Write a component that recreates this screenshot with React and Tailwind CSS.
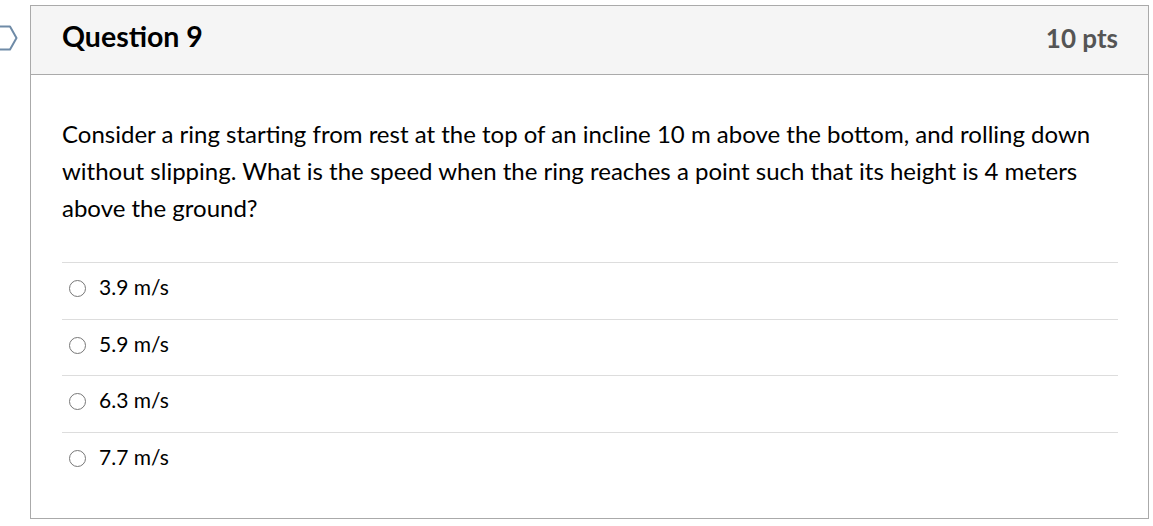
const options = ['3.9 m/s', '5.9 m/s', '6.3 m/s', '7.7 m/s'];

export default function App() {
  return (
    <div className="flex bg-white pt-[5px] pr-[4px] font-['Lato','Liberation_Sans',sans-serif] text-[#000]">
      <div className="w-[30px] shrink-0 pt-[20px]">
        <svg width="20" height="26" viewBox="0 0 20 26">
          <path d="M-4 1.5 H10 L16.5 13 L10 24.5 H-4" fill="none" stroke="#6f8ba7" strokeWidth="2" strokeLinejoin="round" />
        </svg>
      </div>
      <div className="flex-1 h-[514px] border border-[#aaaaaa] flex flex-col">
        <div className="h-[69px] shrink-0 bg-[#f5f5f5] border-b border-[#aaaaaa] flex items-center justify-between pl-[31px] pr-[30px] pb-[3px]">
          <h2 className="text-[28.5px] font-bold text-[#000] mb-[4px]">Question 9</h2>
          <div className="text-[26px] font-bold text-[#555555]">10 pts</div>
        </div>
        <div className="pl-[31px] pr-[30px] pt-[40px]">
          <p className="text-[24px] leading-[37px] text-[#000]">
            Consider a ring starting from rest at the top of an incline 10 m above the bottom, and rolling down without slipping. What is the speed when the ring reaches a point such that its height is 4 meters above the ground?
          </p>
          <div className="mt-[36px]">
            {options.map((o) => (
              <div key={o} className="h-[56.5px] border-t border-[#dddddd] flex items-center pl-[7px] pb-[8px]">
                <span className="w-[17px] h-[17px] rounded-full border-[1.5px] border-[#777777] bg-white shrink-0 mt-[4px]" />
                <span className="ml-[13px] text-[21px] text-[#000]">{o}</span>
              </div>
            ))}
          </div>
        </div>
      </div>
    </div>
  );
}
